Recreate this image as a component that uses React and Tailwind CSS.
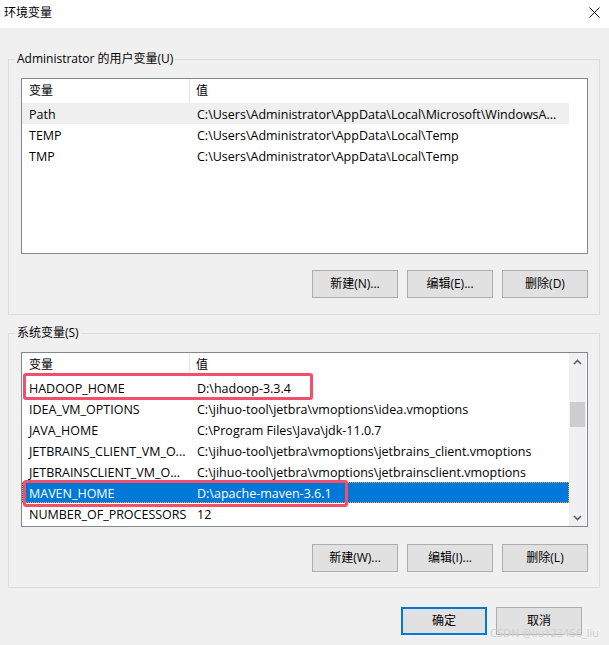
import React from "react";

const F = "font-['Open_Sans','Noto_Sans_CJK_SC',sans-serif]";

function Btn({ children, primary }) {
  return (
    <div
      className={
        "w-[86px] h-[28px] flex items-center justify-center bg-[#e1e1e1] text-[12px] text-black " +
        (primary ? "border-2 border-[#0078d7]" : "border border-[#adadad]")
      }
    >
      {children}
    </div>
  );
}

function Row({ name, value, hover, selected }) {
  return (
    <div
      className={
        "flex h-[21px] pt-[3px] items-center w-[547px] text-[12.5px] " +
        (selected
          ? "bg-[#0078d7] text-white outline outline-1 outline-dotted outline-[#f3a33a] -outline-offset-1"
          : hover
          ? "bg-[#efefef] text-black"
          : "text-black")
      }
    >
      <div className="w-[168px] pl-[7px] whitespace-nowrap overflow-hidden">{name}</div>
      <div className="w-[379px] pl-[7px] whitespace-nowrap overflow-hidden">{value}</div>
    </div>
  );
}

function Header() {
  return (
    <div className="flex h-[24px] w-[547px] text-[12px] text-black bg-white">
      <div className="w-[168px] pl-[7px] flex items-center border-r border-[#e5e5e5]">变量</div>
      <div className="w-[378px] pl-[6px] flex items-center">值</div>
    </div>
  );
}

function Chevron({ up }) {
  return (
    <svg width="9" height="6" viewBox="0 0 9 6">
      <path
        d={up ? "M1 5 L4.5 1.5 L8 5" : "M1 1 L4.5 4.5 L8 1"}
        fill="none"
        stroke="#606060"
        strokeWidth="1.6"
      />
    </svg>
  );
}

export default function App() {
  const user = [
    ["Path", "C:\\Users\\Administrator\\AppData\\Local\\Microsoft\\WindowsA...", true],
    ["TEMP", "C:\\Users\\Administrator\\AppData\\Local\\Temp"],
    ["TMP", "C:\\Users\\Administrator\\AppData\\Local\\Temp"],
  ];
  const sys = [
    ["HADOOP_HOME", "D:\\hadoop-3.3.4"],
    ["IDEA_VM_OPTIONS", "C:\\jihuo-tool\\jetbra\\vmoptions\\idea.vmoptions"],
    ["JAVA_HOME", "C:\\Program Files\\Java\\jdk-11.0.7"],
    ["JETBRAINS_CLIENT_VM_O...", "C:\\jihuo-tool\\jetbra\\vmoptions\\jetbrains_client.vmoptions"],
    ["JETBRAINSCLIENT_VM_O...", "C:\\jihuo-tool\\jetbra\\vmoptions\\jetbrainsclient.vmoptions"],
    ["MAVEN_HOME", "D:\\apache-maven-3.6.1", false, true],
    ["NUMBER_OF_PROCESSORS", "12"],
  ];
  return (
    <div className={"relative w-[609px] h-[645px] bg-[#f0f0f0] overflow-hidden text-black " + F}>
      {/* title bar */}
      <div className="h-[28px] bg-white flex items-center justify-between pl-[4px] pr-[9px]">
        <span className="text-[12px] leading-[16px] mt-[-3px]">环境变量</span>
        <svg width="11" height="11" viewBox="0 0 11 11" className="mt-[-3px]">
          <path d="M0.5 0.5 L10.5 10.5 M10.5 0.5 L0.5 10.5" stroke="#111" strokeWidth="1" />
        </svg>
      </div>

      {/* user vars */}
      <fieldset className="ml-[8px] mt-[23px] w-[592px] border border-[#dcdcdc] pl-[12px] pr-[11px] pt-[11px] pb-[16px]">
        <legend className="-ml-[6px] px-[2px] text-[12px] leading-[16px]">Administrator 的用户变量(U)</legend>
        <div className="w-[567px] h-[176px] border border-[#828790] bg-white flex">
          <div className="flex flex-col">
            <Header />
            {user.map((r) => (
              <Row key={r[0]} name={r[0]} value={r[1]} hover={r[2]} />
            ))}
          </div>
        </div>
        <div className="flex justify-end gap-[9px] mt-[16px]">
          <Btn>新建(N)...</Btn>
          <Btn>编辑(E)...</Btn>
          <Btn>删除(D)</Btn>
        </div>
      </fieldset>

      {/* system vars */}
      <fieldset className="ml-[8px] mt-[10px] w-[592px] border border-[#dcdcdc] pl-[12px] pr-[11px] pt-[11px] pb-[15px]">
        <legend className="-ml-[6px] px-[2px] text-[12px] leading-[16px]">系统变量(S)</legend>
        <div className="relative w-[567px] h-[175px] border border-[#828790] bg-white flex overflow-hidden">
          <div className="flex flex-col">
            <Header />
            {sys.map((r) => (
              <Row key={r[0]} name={r[0]} value={r[1]} selected={r[3]} />
            ))}
          </div>
          <div className="w-[17px] h-full bg-[#f0f0f0] flex flex-col items-center">
            <div className="h-[17px] w-full flex items-center justify-center">
              <Chevron up />
            </div>
            <div className="mt-[32px] w-[15px] h-[25px] bg-[#cdcdcd]" />
            <div className="flex-1" />
            <div className="h-[17px] w-full flex items-center justify-center">
              <Chevron />
            </div>
          </div>
          {/* annotation boxes */}
          <div className="absolute left-[1px] top-[20px] w-[290px] h-[27px] border-[3px] border-[#f0506c] rounded-[3px]" />
          <div className="absolute left-[1px] top-[127px] w-[325px] h-[27px] border-[3px] border-[#f0506c] rounded-[3px]" />
        </div>
        <div className="flex justify-end gap-[9px] mt-[17px]">
          <Btn>新建(W)...</Btn>
          <Btn>编辑(I)...</Btn>
          <Btn>删除(L)</Btn>
        </div>
      </fieldset>

      <div className="flex justify-end gap-[9px] mt-[19px] pr-[27px]">
        <Btn primary>确定</Btn>
        <Btn>取消</Btn>
      </div>

      <div className="absolute left-[490px] top-[625px] whitespace-nowrap text-[11px] leading-[16px] text-[#cfcfcf]">
        CSDN @liu123456_liu
      </div>
    </div>
  );
}
